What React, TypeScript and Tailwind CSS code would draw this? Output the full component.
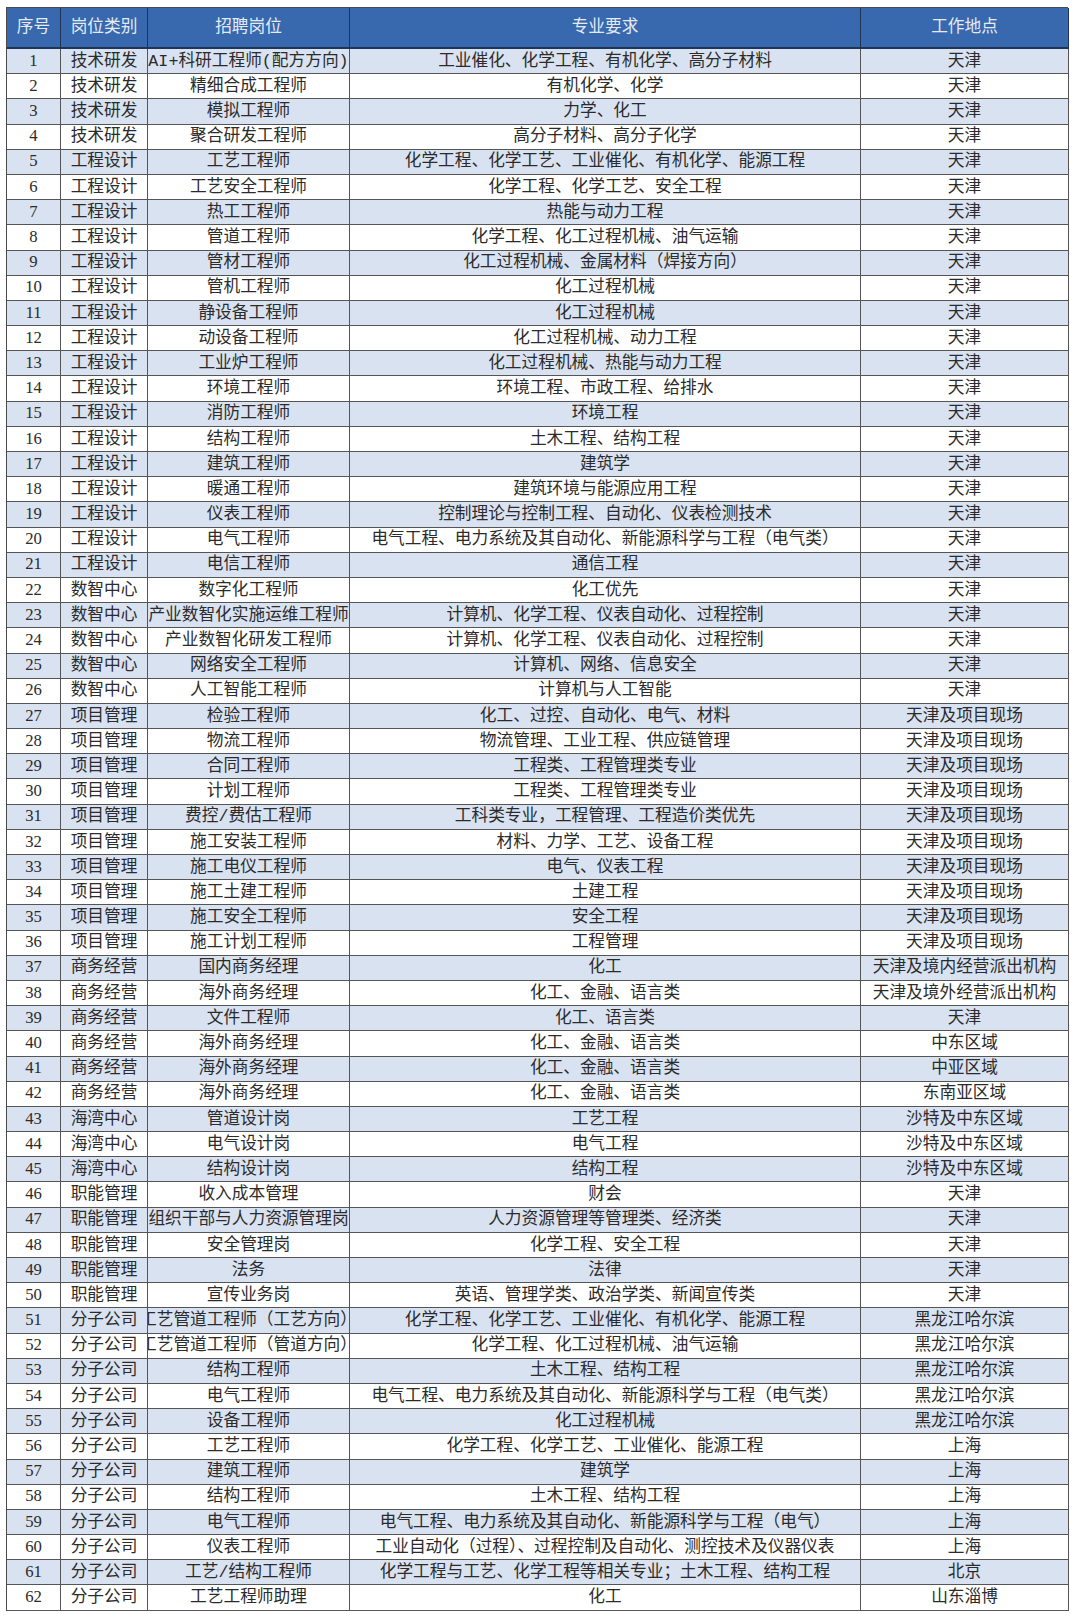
const rows: [string, string, string, string][] = [
  ["技术研发", "AI+科研工程师(配方方向)", "工业催化、化学工程、有机化学、高分子材料", "天津"],
  ["技术研发", "精细合成工程师", "有机化学、化学", "天津"],
  ["技术研发", "模拟工程师", "力学、化工", "天津"],
  ["技术研发", "聚合研发工程师", "高分子材料、高分子化学", "天津"],
  ["工程设计", "工艺工程师", "化学工程、化学工艺、工业催化、有机化学、能源工程", "天津"],
  ["工程设计", "工艺安全工程师", "化学工程、化学工艺、安全工程", "天津"],
  ["工程设计", "热工工程师", "热能与动力工程", "天津"],
  ["工程设计", "管道工程师", "化学工程、化工过程机械、油气运输", "天津"],
  ["工程设计", "管材工程师", "化工过程机械、金属材料（焊接方向）", "天津"],
  ["工程设计", "管机工程师", "化工过程机械", "天津"],
  ["工程设计", "静设备工程师", "化工过程机械", "天津"],
  ["工程设计", "动设备工程师", "化工过程机械、动力工程", "天津"],
  ["工程设计", "工业炉工程师", "化工过程机械、热能与动力工程", "天津"],
  ["工程设计", "环境工程师", "环境工程、市政工程、给排水", "天津"],
  ["工程设计", "消防工程师", "环境工程", "天津"],
  ["工程设计", "结构工程师", "土木工程、结构工程", "天津"],
  ["工程设计", "建筑工程师", "建筑学", "天津"],
  ["工程设计", "暖通工程师", "建筑环境与能源应用工程", "天津"],
  ["工程设计", "仪表工程师", "控制理论与控制工程、自动化、仪表检测技术", "天津"],
  ["工程设计", "电气工程师", "电气工程、电力系统及其自动化、新能源科学与工程（电气类）", "天津"],
  ["工程设计", "电信工程师", "通信工程", "天津"],
  ["数智中心", "数字化工程师", "化工优先", "天津"],
  ["数智中心", "产业数智化实施运维工程师", "计算机、化学工程、仪表自动化、过程控制", "天津"],
  ["数智中心", "产业数智化研发工程师", "计算机、化学工程、仪表自动化、过程控制", "天津"],
  ["数智中心", "网络安全工程师", "计算机、网络、信息安全", "天津"],
  ["数智中心", "人工智能工程师", "计算机与人工智能", "天津"],
  ["项目管理", "检验工程师", "化工、过控、自动化、电气、材料", "天津及项目现场"],
  ["项目管理", "物流工程师", "物流管理、工业工程、供应链管理", "天津及项目现场"],
  ["项目管理", "合同工程师", "工程类、工程管理类专业", "天津及项目现场"],
  ["项目管理", "计划工程师", "工程类、工程管理类专业", "天津及项目现场"],
  ["项目管理", "费控/费估工程师", "工科类专业，工程管理、工程造价类优先", "天津及项目现场"],
  ["项目管理", "施工安装工程师", "材料、力学、工艺、设备工程", "天津及项目现场"],
  ["项目管理", "施工电仪工程师", "电气、仪表工程", "天津及项目现场"],
  ["项目管理", "施工土建工程师", "土建工程", "天津及项目现场"],
  ["项目管理", "施工安全工程师", "安全工程", "天津及项目现场"],
  ["项目管理", "施工计划工程师", "工程管理", "天津及项目现场"],
  ["商务经营", "国内商务经理", "化工", "天津及境内经营派出机构"],
  ["商务经营", "海外商务经理", "化工、金融、语言类", "天津及境外经营派出机构"],
  ["商务经营", "文件工程师", "化工、语言类", "天津"],
  ["商务经营", "海外商务经理", "化工、金融、语言类", "中东区域"],
  ["商务经营", "海外商务经理", "化工、金融、语言类", "中亚区域"],
  ["商务经营", "海外商务经理", "化工、金融、语言类", "东南亚区域"],
  ["海湾中心", "管道设计岗", "工艺工程", "沙特及中东区域"],
  ["海湾中心", "电气设计岗", "电气工程", "沙特及中东区域"],
  ["海湾中心", "结构设计岗", "结构工程", "沙特及中东区域"],
  ["职能管理", "收入成本管理", "财会", "天津"],
  ["职能管理", "组织干部与人力资源管理岗", "人力资源管理等管理类、经济类", "天津"],
  ["职能管理", "安全管理岗", "化学工程、安全工程", "天津"],
  ["职能管理", "法务", "法律", "天津"],
  ["职能管理", "宣传业务岗", "英语、管理学类、政治学类、新闻宣传类", "天津"],
  ["分子公司", "工艺管道工程师（工艺方向）", "化学工程、化学工艺、工业催化、有机化学、能源工程", "黑龙江哈尔滨"],
  ["分子公司", "工艺管道工程师（管道方向）", "化学工程、化工过程机械、油气运输", "黑龙江哈尔滨"],
  ["分子公司", "结构工程师", "土木工程、结构工程", "黑龙江哈尔滨"],
  ["分子公司", "电气工程师", "电气工程、电力系统及其自动化、新能源科学与工程（电气类）", "黑龙江哈尔滨"],
  ["分子公司", "设备工程师", "化工过程机械", "黑龙江哈尔滨"],
  ["分子公司", "工艺工程师", "化学工程、化学工艺、工业催化、能源工程", "上海"],
  ["分子公司", "建筑工程师", "建筑学", "上海"],
  ["分子公司", "结构工程师", "土木工程、结构工程", "上海"],
  ["分子公司", "电气工程师", "电气工程、电力系统及其自动化、新能源科学与工程（电气）", "上海"],
  ["分子公司", "仪表工程师", "工业自动化（过程）、过程控制及自动化、测控技术及仪器仪表", "上海"],
  ["分子公司", "工艺/结构工程师", "化学工程与工艺、化学工程等相关专业；土木工程、结构工程", "北京"],
  ["分子公司", "工艺工程师助理", "化工", "山东淄博"],
];

const headers = ["序号", "岗位类别", "招聘岗位", "专业要求", "工作地点"];

// the 招聘岗位 column shows its latin letters half-width, like SimSun does
const monoCol = 2;

export default function App() {
  return (
    <div
      className="min-h-[1618px] bg-white pl-[6px] pt-[7px]"
      style={{ fontFamily: '"Liberation Serif", "Noto Sans CJK SC", serif' }}
    >
      <div className="grid w-[1062px] grid-cols-[54px_87px_202px_511px_208px] border-l border-t border-[#4a4a4a] text-[16.7px] leading-none">
        {headers.map((h) => (
          <div
            key={h}
            className="flex h-[41px] items-center justify-center border-b-2 border-r border-b-[#1e3556] border-r-[#1e3556] bg-[#3868ad] text-[#e4ebf5]"
          >
            {h}
          </div>
        ))}
        {rows.map((r, i) => {
          const bg = i % 2 === 0 ? "bg-[#d9e2f1]" : "bg-white";
          return [String(i + 1), ...r].map((c, j) => (
            <div
              key={`${i}-${j}`}
              className={`flex h-[25.2px] items-center justify-center overflow-hidden whitespace-nowrap border-b border-r border-[#555555] text-[#2b2b2b] ${bg} ${j === monoCol ? "pt-[2px]" : ""}`}
              style={j === monoCol ? { fontFamily: '"Liberation Mono", "Noto Sans CJK SC", monospace' } : undefined}
            >
              {c}
            </div>
          ));
        })}
      </div>
    </div>
  );
}
